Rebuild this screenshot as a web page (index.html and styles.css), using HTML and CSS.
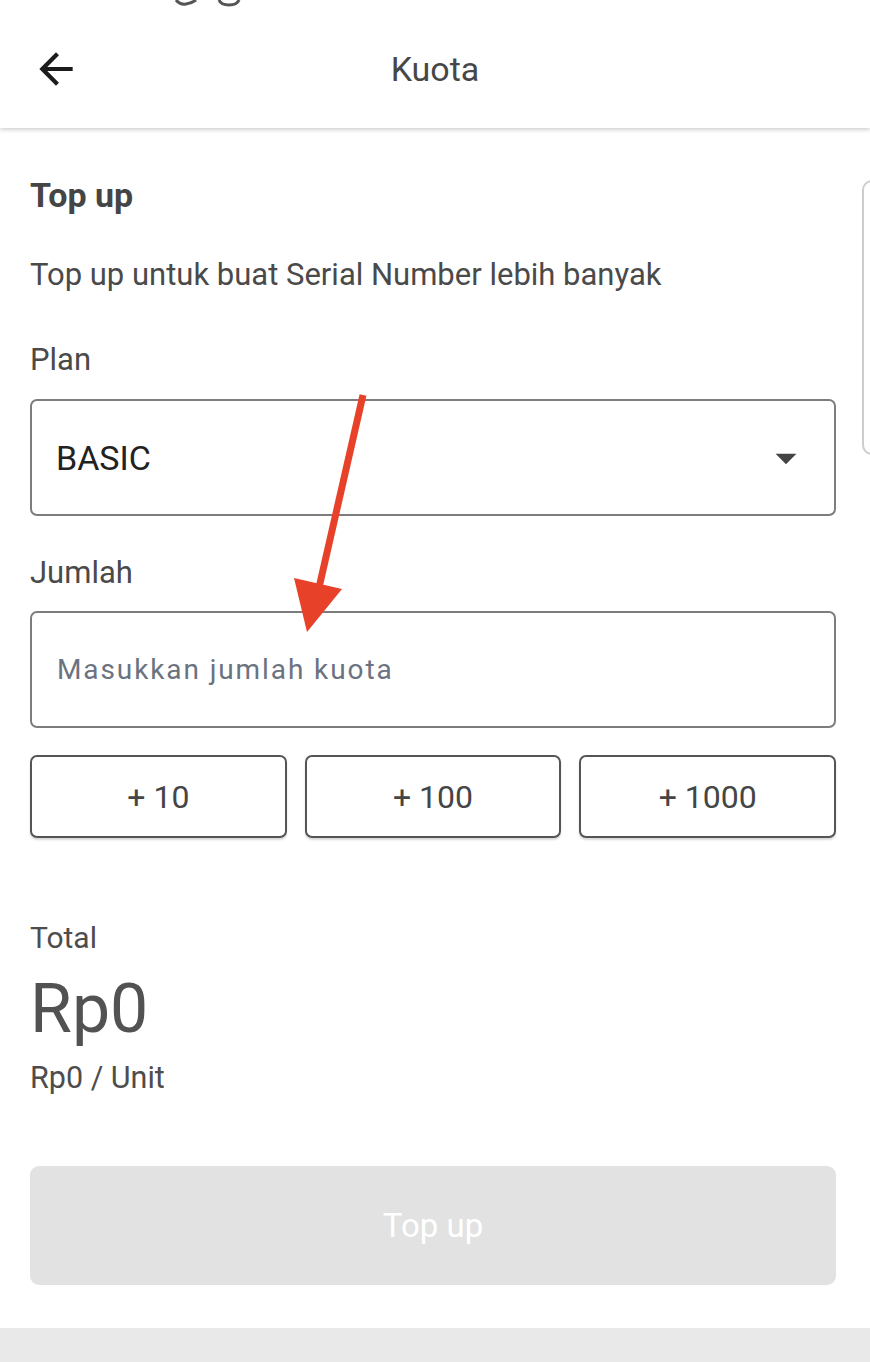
FILE: index.html
```html
<!DOCTYPE html>
<html lang="id">
<head>
<meta charset="utf-8">
<title>Kuota</title>
<link rel="stylesheet" href="styles.css">
</head>
<body>
<div class="screen">
  <header class="appbar">
    <svg class="status-remnant" width="80" height="8" viewBox="0 0 80 8">
      <path d="M2 0 Q6 5 12 4 Q18 3 22 0" fill="none" stroke="#555" stroke-width="3"/>
      <path d="M45 0 Q47 5 55 5 Q63 5 65 0" fill="none" stroke="#555" stroke-width="3"/>
    </svg>
    <button class="back" aria-label="Kembali">
      <svg width="50" height="50" viewBox="0 0 24 24"><path d="M20 11H7.83l5.59-5.59L12 4l-8 8 8 8 1.41-1.41L7.83 13H20v-2z" fill="#1b1b1b"/></svg>
    </button>
    <h1 class="title">Kuota</h1>
    <span class="spacer"></span>
  </header>

  <div class="pager">
    <main class="panel">
      <h2 class="heading">Top up</h2>
      <p class="subtitle">Top up untuk buat Serial Number lebih banyak</p>

      <label class="label label-plan">Plan</label>
      <div class="field select">
        <span class="select-value">BASIC</span>
        <svg class="caret" width="50" height="50" viewBox="0 0 24 24"><path d="M7 10l5 5 5-5z" fill="#444"/></svg>
      </div>

      <label class="label label-jumlah">Jumlah</label>
      <div class="field input">
        <span class="placeholder">Masukkan jumlah kuota</span>
      </div>

      <div class="quick">
        <button class="chip">+ 10</button>
        <button class="chip">+ 100</button>
        <button class="chip">+ 1000</button>
      </div>

      <div class="total-label">Total</div>
      <div class="total-value">Rp0</div>
      <div class="unit">Rp0 / Unit</div>

      <button class="submit">Top up</button>
    </main>
    <div class="peek"></div>
  </div>

  <div class="navbar"></div>

  <svg class="annotation" width="870" height="1362" viewBox="0 0 870 1362">
    <line x1="363" y1="395" x2="318" y2="592" stroke="#e8412a" stroke-width="7"/>
    <polygon points="294,578 342,589 307,632" fill="#e8412a"/>
  </svg>
</div>
</body>
</html>
```

FILE: styles.css
```css
* { box-sizing: border-box; }

html, body {
  margin: 0;
  padding: 0;
  background: #ffffff;
}

body {
  font-family: Roboto, "Noto Sans", "Liberation Sans", sans-serif;
  color: #4a4a4a;
}

.screen {
  position: relative;
  width: 870px;
  height: 1362px;
  overflow: hidden;
  background: #fff;
}

.appbar {
  position: relative;
  height: 128px;
  padding-top: 10px;
  display: grid;
  grid-template-columns: 1fr auto 1fr;
  align-items: center;
  background: #fff;
  box-shadow: 0 2px 4px rgba(0, 0, 0, 0.18);
  z-index: 2;
}

.status-remnant {
  position: absolute;
  left: 174px;
  top: 0;
}

.back {
  justify-self: start;
  margin-left: 31px;
  padding: 0;
  border: 0;
  background: none;
  width: 50px;
  height: 50px;
  display: flex;
}

.title {
  margin: 0;
  font-size: 34px;
  line-height: 40px;
  font-weight: 400;
  color: #474747;
}

.pager {
  display: flex;
  align-items: flex-start;
  width: 870px;
  overflow: hidden;
}

.panel {
  flex: 0 0 862px;
  padding: 0 26px 0 30px;
  display: flex;
  flex-direction: column;
}

.peek {
  flex: 0 0 40px;
  margin-top: 52px;
  height: 275px;
  border: 2px solid #cdcdcd;
  border-radius: 10px;
}

.heading {
  margin: 48px 0 0;
  font-size: 34px;
  line-height: 38px;
  font-weight: 700;
  color: #454545;
}

.subtitle {
  margin: 43px 0 0;
  font-size: 31px;
  line-height: 36px;
  color: #4a4a4a;
}

.label {
  display: block;
  font-size: 31px;
  line-height: 36px;
  color: #4a4a4a;
}

.label-plan { margin-top: 49px; }
.label-jumlah { margin-top: 39px; }

.field {
  height: 117px;
  border: 2px solid #7d7d7d;
  border-radius: 7px;
  display: flex;
  align-items: center;
}

.select {
  margin-top: 21px;
  padding: 0 23px 0 24px;
  justify-content: space-between;
}

.select-value {
  font-size: 34px;
  color: #222;
}

.caret { display: block; }

.input {
  margin-top: 20px;
  padding: 0 25px;
}

.placeholder {
  font-size: 28px;
  letter-spacing: 1.9px;
  color: #6b7280;
}

.quick {
  margin-top: 27px;
  display: grid;
  grid-template-columns: repeat(3, 1fr);
  gap: 18px;
}

.chip {
  height: 83px;
  border: 2px solid #555;
  border-radius: 7px;
  background: #fff;
  box-shadow: 0 2px 2px rgba(0, 0, 0, 0.15);
  font-family: inherit;
  font-size: 32px;
  color: #454545;
  padding: 0;
}

.total-label {
  margin-top: 82px;
  font-size: 30px;
  line-height: 36px;
  color: #4d4d4d;
}

.total-value {
  margin-top: 13px;
  font-size: 68px;
  line-height: 80px;
  color: #525252;
}

.unit {
  margin-top: 11px;
  font-size: 30.5px;
  line-height: 36px;
  color: #4d4d4d;
}

.submit {
  margin-top: 70px;
  height: 119px;
  border: 0;
  border-radius: 9px;
  background: #e2e2e2;
  color: #ffffff;
  font-family: inherit;
  font-size: 33px;
  padding: 0;
}

.navbar {
  margin-top: 43px;
  height: 40px;
  background: #e9e9e9;
}

.annotation {
  position: absolute;
  left: 0;
  top: 0;
  pointer-events: none;
  z-index: 5;
}
```
